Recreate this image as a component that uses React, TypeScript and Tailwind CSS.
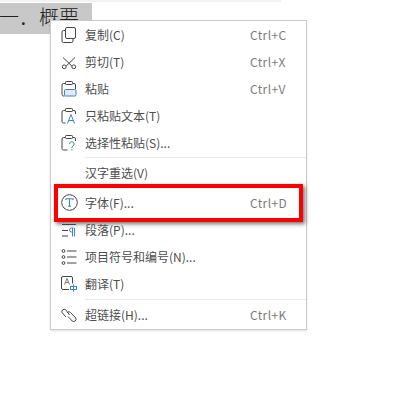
import React from 'react';

const stroke = '#444444';
const blue = '#3a82d8';

const Copy = () => (
  <svg width="16" height="16" viewBox="0 0 16 16" fill="none" stroke={stroke} strokeWidth="1">
    <rect x="4.5" y="0.5" width="10" height="11" rx="1.5" />
    <path d="M4.500 3.500h-2a1.500 1.500 0 0 0-1.500 1.500v9a1.500 1.500 0 0 0 1.500 1.500h8a1.500 1.500 0 0 0 1.500-1.500v-2.500" />
  </svg>
);
const Cut = () => (
  <svg width="16" height="16" viewBox="0 0 16 16" fill="none" stroke={stroke} strokeWidth="1">
    <path d="M2 3.500l9 8.700M14 3.500l-9 8.700" />
    <circle cx="3.200" cy="12.800" r="1.900" />
    <circle cx="12.800" cy="12.800" r="1.900" />
  </svg>
);
const Paste = () => (
  <svg width="16" height="16" viewBox="0 0 16 16" fill="none" strokeWidth="1">
    <path d="M4 2.500h-1.500a1.500 1.500 0 0 0-1.500 1.500v9.500a1.500 1.500 0 0 0 1.500 1.500h1M12 2.500h1a1.500 1.500 0 0 1 1.500 1.500v4" stroke={stroke} />
    <rect x="4.500" y="0.500" width="7" height="3" rx="0.800" stroke={stroke} />
    <rect x="3.500" y="8.500" width="11.500" height="6.500" rx="1.200" stroke={blue} fill="#e3edfa" />
  </svg>
);
const PasteText = () => (
  <svg width="16" height="16" viewBox="0 0 16 16" fill="none" strokeWidth="1">
    <path d="M4 2.500h-1.500a1.500 1.500 0 0 0-1.500 1.500v9.500a1.500 1.500 0 0 0 1.500 1.500h2M12 2.500h1a1.500 1.500 0 0 1 1.500 1.500v2" stroke={stroke} />
    <rect x="4.500" y="0.500" width="7" height="3" rx="0.800" stroke={stroke} />
    <path d="M6.500 15.500l3.500-9 3.500 9M7.800 12.500h4.400" stroke={blue} />
  </svg>
);
const PasteSpecial = () => (
  <svg width="16" height="16" viewBox="0 0 16 16" fill="none" strokeWidth="1">
    <path d="M4 2.500h-1.500a1.500 1.500 0 0 0-1.500 1.500v9.500a1.500 1.500 0 0 0 1.500 1.500h4M12 2.500h1a1.500 1.500 0 0 1 1.500 1.500v2" stroke={stroke} />
    <rect x="4.500" y="0.500" width="7" height="3" rx="0.800" stroke={stroke} />
    <path d="M8.500 9a2.300 2.300 0 1 1 3.500 2c-.8.500-1.200 1-1.200 2M10.800 14.200v1.300" stroke={blue} />
  </svg>
);
const Font = () => (
  <svg width="17" height="17" viewBox="0 0 17 17" fill="none">
    <circle cx="8.500" cy="8.500" r="7.800" stroke={stroke} strokeWidth="1" />
    <path d="M5 6V4.800h7V6M8.500 4.800v7.400M7 12.200h3" stroke={blue} strokeWidth="1.100" />
  </svg>
);
const Paragraph = () => (
  <svg width="16" height="16" viewBox="0 0 16 16" fill="none" strokeWidth="1">
    <path d="M1 2.500h14M1 8.500h6M1 14h6" stroke={stroke} />
    <path d="M12.500 6h-2a2 2 0 0 0 0 4h1M11.500 6v8.500M13.500 6v8.500" stroke={blue} />
  </svg>
);
const List = () => (
  <svg width="16" height="16" viewBox="0 0 16 16" fill="none" stroke={stroke} strokeWidth="1">
    <circle cx="2.500" cy="2" r="1.400" />
    <circle cx="2.500" cy="8" r="1.400" />
    <circle cx="2.500" cy="14" r="1.400" />
    <path d="M6 2h9.500M6 8h9.500M6 14h9.500" />
  </svg>
);
const Translate = () => (
  <svg width="17" height="17" viewBox="0 0 17 17" fill="none" strokeWidth="1">
    <path d="M8 14.500h-6a1.500 1.500 0 0 1-1.500-1.500v-10a1.500 1.500 0 0 1 1.500-1.500h8a1.500 1.500 0 0 1 1.500 1.500v5.500" stroke={stroke} />
    <path d="M3.500 9.500l2.500-6 2.500 6M4.500 7.500h3" stroke="#777777" />
    <rect x="9.500" y="11.500" width="6" height="3" stroke={blue} />
    <path d="M12.500 9.500v7" stroke={blue} />
  </svg>
);
const Link = () => (
  <svg width="17" height="17" viewBox="0 0 17 17" fill="none" stroke={stroke} strokeWidth="1">
    <path d="M8.500 9L4.600 3.600A2.400 2.400 0 0 0 1.200 6.800L5 11" />
    <path d="M6.500 6.500A2 2 0 0 1 9.500 6.500L14.800 12A2.400 2.400 0 0 1 11.200 15L7 10.500" />
  </svg>
);

const Row = ({ icon, label, keys, boxed }: { icon?: React.ReactNode; label: string; keys?: string; boxed?: boolean }) => (
  <div className="relative flex h-[27px] items-center">
    <div className="flex w-[34px] justify-start pl-[10px]">{icon}</div>
    <span className="text-[#4d4d4d]">{label}</span>
    {keys && <span className="absolute left-[199px] tracking-[0.4px] text-[#7c7c7c]">{keys}</span>}
    {boxed && (
      <div className="absolute left-[3px] top-[-5px] h-[38px] w-[249px] border-[4px] border-[#ff0000] shadow-[2px_2px_4px_rgba(0,0,0,0.55)]" />
    )}
  </div>
);

const Sep = ({ className }: { className: string }) => <div className={`ml-[34px] h-px bg-[#ebebeb] ${className}`} />;

export default function App() {
  return (
    <div className="relative h-[400px] w-[400px] overflow-hidden bg-white font-['Noto_Sans_CJK_SC','Liberation_Sans',sans-serif] text-[12px]">
      <div className="h-[2px] w-[281px] bg-[#f3f3f3]" />
      <div className="mt-px flex h-[31px] w-[92px] items-center overflow-hidden bg-[#c8c8c8] font-['Liberation_Serif','Noto_Sans_CJK_SC',serif] text-[20px] font-light text-[#222]">
        <span className="-ml-px -mt-[2px] whitespace-nowrap">一．概要</span>
      </div>

      <div className="absolute left-[50px] top-[20px] h-[310px] w-[257px] border border-[#cbcbcb] bg-white shadow-[0_1px_2px_rgba(0,0,0,0.12)]">
        <Row icon={<Copy />} label="复制(C)" keys="Ctrl+C" />
        <Row icon={<Cut />} label="剪切(T)" keys="Ctrl+X" />
        <Row icon={<Paste />} label="粘贴" keys="Ctrl+V" />
        <Row icon={<PasteText />} label="只粘贴文本(T)" />
        <Row icon={<PasteSpecial />} label="选择性粘贴(S)..." />
        <Sep className="mt-px mb-px" />
        <Row label="汉字重选(V)" />
        <div className="h-[3px]" />
        <Row icon={<Font />} label="字体(F)..." keys="Ctrl+D" boxed />
        <Row icon={<Paragraph />} label="段落(P)..." />
        <Row icon={<List />} label="项目符号和编号(N)..." />
        <Row icon={<Translate />} label="翻译(T)" />
        <Sep className="mt-[2px] mb-px" />
        <Row icon={<Link />} label="超链接(H)..." keys="Ctrl+K" />
      </div>
    </div>
  );
}
